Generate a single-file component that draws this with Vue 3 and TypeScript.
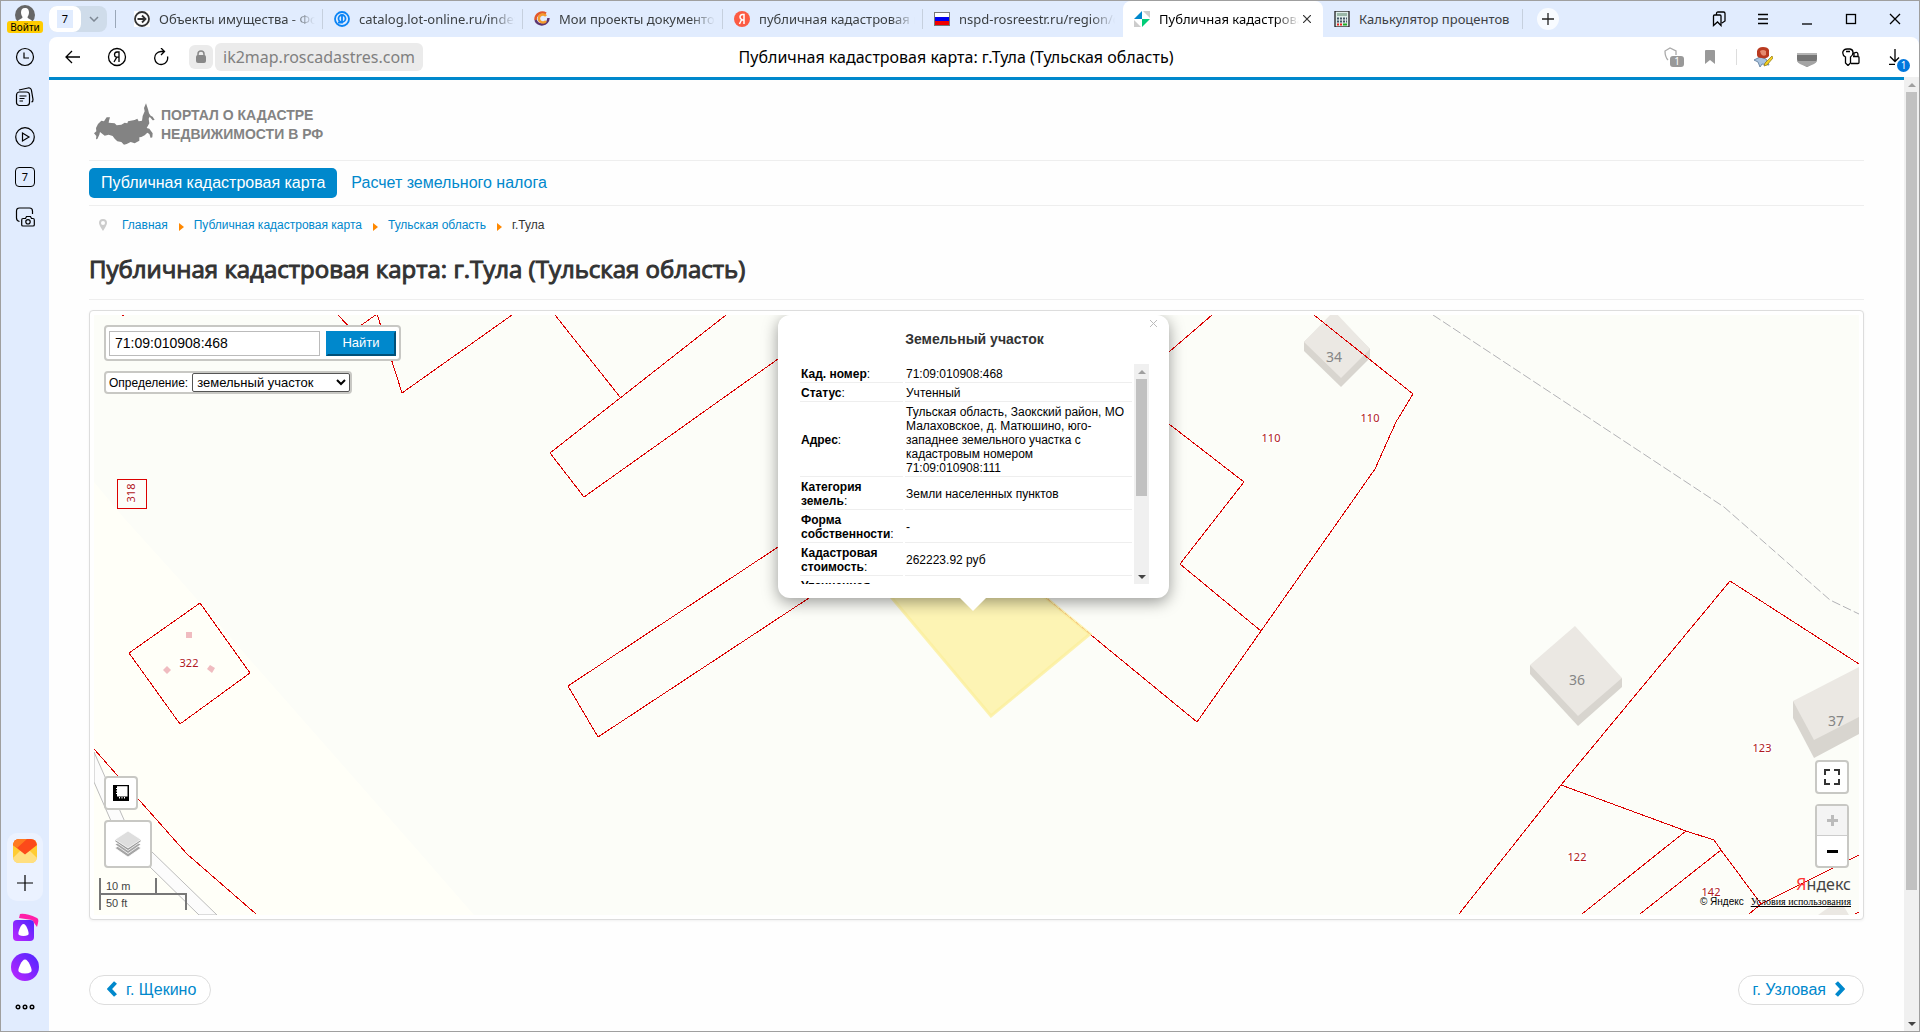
<script setup lang="ts">
import { ref } from 'vue'

interface Tab { title: string; icon: string; active?: boolean }
interface Fact { name: string; value: string }
interface Label { x: number; y: number; text: string }

const tabs: Tab[] = [
  { title: 'Объекты имущества - Фонд', icon: 'arrow' },
  { title: 'catalog.lot-online.ru/index.php', icon: 'lot' },
  { title: 'Мои проекты документов', icon: 'swirl' },
  { title: 'публичная кадастровая карта', icon: 'ya' },
  { title: 'nspd-rosreestr.ru/region/center', icon: 'flag' },
  { title: 'Публичная кадастровая карта', icon: 'cadastre', active: true },
  { title: 'Калькулятор процентов', icon: 'calc' },
]

const facts: Fact[] = [
  { name: 'Кад. номер', value: '71:09:010908:468' },
  { name: 'Статус', value: 'Учтенный' },
  { name: 'Адрес', value: 'Тульская область, Заокский район, МО Малаховское, д. Матюшино, юго-западнее земельного участка с кадастровым номером 71:09:010908:111' },
  { name: 'Категория земель', value: 'Земли населенных пунктов' },
  { name: 'Форма собственности', value: '-' },
  { name: 'Кадастровая стоимость', value: '262223.92 руб' },
  { name: 'Уточненная площадь', value: '' },
]

const parcelLabels: Label[] = [
  { x: 1271, y: 442, text: '110' },
  { x: 1370, y: 422, text: '110' },
  { x: 1762, y: 752, text: '123' },
  { x: 1577, y: 861, text: '122' },
  { x: 1711, y: 896, text: '142' },
  { x: 189, y: 667, text: '322' },
]
const houseLabels: Label[] = [
  { x: 1334, y: 362, text: '34' },
  { x: 1577, y: 685, text: '36' },
  { x: 1836, y: 726, text: '37' },
]

const query = ref('71:09:010908:468')
const kind = ref('parcel')
</script>

<template>
  <div class="frame">
    <aside class="rail">
      <button class="login" aria-label="Войти">
        <svg width="20" height="20" viewBox="0 0 20 20"><circle cx="10" cy="10" r="10" fill="#666" /><path d="M10 3c3 0 4 2 4 4.500c0 2-1 3.500-1.500 4.500c0 2 3.500 2 4.500 4a10 10 0 0 1-14 0c1-2 4.500-2 4.500-4C7 11 6 9.500 6 7.500C6 5 7 3 10 3z" fill="#fff" /></svg>
        <span>Войти</span>
      </button>
      <button class="rail-btn" aria-label="История"><svg width="20" height="20" viewBox="0 0 20 20"><circle cx="10" cy="10" r="8.500" /><path d="M9 5.500V11h5" /></svg></button>
      <button class="rail-btn" aria-label="Коллекции"><svg width="20" height="20" viewBox="0 0 20 20"><rect x="1.500" y="5" width="13" height="13.500" rx="3" /><path d="M4 3l9-2q3-.5 3.500 2.500l1.500 9q.2 2-1.500 2.500M4.500 9h7M4.500 11.500h5M4.500 14h3.500" /></svg></button>
      <button class="rail-btn" aria-label="Видео"><svg width="20" height="20" viewBox="0 0 20 20"><circle cx="10" cy="10" r="9.300" /><path d="M7.500 6v8l6.500-4z" /></svg></button>
      <button class="rail-btn seven">7</button>
      <button class="rail-btn" aria-label="Снимок"><svg width="20" height="20" viewBox="0 0 20 20"><path d="M4.500 14.500Q1.500 14 1.500 11V4q0-3 3-3h10q3 0 3 3v3" /><path d="M8 11.500h2.500l1-2h4l1 2H18q1.300 0 1.300 1.500v5q0 1-1.300 1H8q-1.300 0-1.300-1v-5q0-1.500 1.300-1.500z" /><circle cx="13" cy="14.800" r="2.200" /></svg></button>
      <div class="rail-group">
        <button class="plain" aria-label="Почта"><svg width="24" height="24" viewBox="0 0 24 24"><rect width="24" height="24" rx="6" fill="#ffcc33" /><path d="M0 19L8 11l4 4 4-4 8 8q-1 5-6 5H6q-5 0-6-5z" fill="#ffdf80" /><path d="M0 6Q1 0 6 0h12q5 0 6 6L12 15.500z" fill="#fc4a1a" /><path d="M0 6Q1 0 6 0h8L4 9z" fill="#ff7a1f" /></svg></button>
        <button class="plain" aria-label="Добавить"><svg width="16" height="16" viewBox="0 0 16 16" stroke="#000" stroke-width="1.200"><path d="M8 0v16M0 8h16" /></svg></button>
      </div>
      <div class="alice">
        <svg width="28" height="28" viewBox="0 0 28 28">
          <defs><linearGradient id="violet" x1="0" y1="1" x2="1" y2="0"><stop offset="0" stop-color="#c026ff" /><stop offset="1" stop-color="#4a26ff" /></linearGradient></defs>
          <path d="M8 5L9 1q6-1 17 4q2 1 1 5l-1 4-5-7z" fill="#ff1fa8" /><rect x="2" y="7" width="21" height="21" rx="4" fill="url(#violet)" /><path d="M12.500 11q2 0 4 5t.5 6q-2 1-4.500 1t-4.500-1q-1.500-1 .5-6t4-5z" fill="#fff" />
        </svg>
        <svg width="28" height="28" viewBox="0 0 28 28"><circle cx="14" cy="14" r="14" fill="url(#violet)" /><path d="M14 6.500q2.500 0 5 5.500t1 7q-2.500 1.500-6 1.500t-6-1.500q-1.500-1.500 1-7t5-5.500z" fill="#fff" /></svg>
        <svg width="20" height="8" viewBox="0 0 20 8" fill="none" stroke="#000" stroke-width="1.400"><circle cx="3" cy="4" r="1.800" /><circle cx="10" cy="4" r="1.800" /><circle cx="17" cy="4" r="1.800" /></svg>
      </div>
    </aside>

    <div class="window">
      <header class="strip">
        <div class="tab-count"><button class="count">7</button><button class="more" aria-label="Группы"><svg width="10" height="6" viewBox="0 0 10 6" fill="none" stroke="#7e8894" stroke-width="1.500"><path d="M1 1l4 4 4-4" /></svg></button></div>
        <nav class="tabs">
          <a v-for="t in tabs" :key="t.title" href="#" class="tab" :class="{ active: t.active }">
            <svg class="fav" width="16" height="16" viewBox="0 0 16 16">
              <g v-if="t.icon === 'arrow'" fill="none" stroke="#333" stroke-width="1.800"><rect width="16" height="16" fill="#fff" stroke="none" /><circle cx="8" cy="8" r="7" /><path d="M3.500 8h8M8 4.500L11.500 8 8 11.500" /></g>
              <g v-else-if="t.icon === 'lot'" fill="none" stroke="#0a84f5" stroke-width="1.800"><circle cx="8" cy="8" r="7" /><circle cx="8" cy="7.500" r="3.500" /><path d="M8 5v6.500H4" /></g>
              <g v-else-if="t.icon === 'swirl'" fill="none" stroke-width="2.500"><path d="M12 2.500A7 7 0 0 0 1.500 9" stroke="#e2582b" /><path d="M1.500 9a6.700 6.700 0 0 0 13-2" stroke="#5c3570" /><path d="M12 5a4 4 0 1 0 0 5" stroke="#f49b2c" /></g>
              <g v-else-if="t.icon === 'ya'"><circle cx="8" cy="8" r="8" fill="#fc5b43" /><path d="M10 13V3.500H8.500Q6 3.700 6 6q0 1.600 1.600 2.500L5.500 13M10 9H8" fill="none" stroke="#fff" stroke-width="1.500" /></g>
              <g v-else-if="t.icon === 'flag'"><rect y="1" width="16" height="14" fill="#777" /><rect x="1" y="2" width="14" height="4" fill="#fff" /><rect x="1" y="6" width="14" height="4" fill="#0000f0" /><rect x="1" y="10" width="14" height="4" fill="#f00000" /></g>
              <g v-else-if="t.icon === 'cadastre'"><path d="M8 0v8H0z" fill="#0088cc" /><path d="M9 0h7v7z" fill="#ccc" /><path d="M0 9v7h7z" fill="#ccc" /><path d="M8 8h8l-8 8z" fill="#00cc77" /></g>
              <g v-else><rect x="1" width="14" height="16" fill="#dfeeea" stroke="#222" stroke-width="1.300" /><rect x="3" y="2" width="10" height="3" fill="#9ab8a8" /><path d="M3 7.500h2m1 0h2m1 0h2m1 0h1M3 10.500h2m1 0h2m1 0h2m1 0h1" stroke="#456" stroke-width="2" /><path d="M3 13.500h2m1 0h2" stroke="#e22" stroke-width="2" /><path d="M9 13.500h4" stroke="#2a2" stroke-width="2" /></g>
            </svg>
            <span class="tab-title" :class="{ short: t.icon === 'calc' }">{{ t.title }}</span>
            <svg v-if="t.active" class="tab-x" width="8" height="8" viewBox="0 0 8 8" stroke="#333" stroke-width="1.200"><path d="M0 0l8 8M8 0L0 8" /></svg>
          </a>
        </nav>
        <button class="new-tab" aria-label="Новая вкладка"><svg width="12" height="12" viewBox="0 0 12 12" stroke="#222" stroke-width="1.300"><path d="M6 0v12M0 6h12" /></svg></button>
        <div class="win-btns">
          <button class="wbtn" aria-label="Закладки"><svg width="14" height="16" viewBox="0 0 14 16"><path d="M1.500 5q0-1 1-1h5.500q1 0 1 1v9.500L5.500 11l-4 3.500zM4.500 3.500V2.500q0-1.500 1.500-1.500h5.500q1.500 0 1.500 1.500V10l-3 2" /></svg></button>
          <button class="wbtn" aria-label="Меню"><svg width="12" height="12" viewBox="0 0 12 12"><path d="M1 1.500h10M1 6h10M1 10.500h10" /></svg></button>
          <button class="wbtn" aria-label="Свернуть"><svg width="12" height="12" viewBox="0 0 12 12"><path d="M1 11h10" /></svg></button>
          <button class="wbtn" aria-label="Развернуть"><svg width="12" height="12" viewBox="0 0 12 12"><rect x="1.500" y="1.500" width="9" height="9" /></svg></button>
          <button class="wbtn" aria-label="Закрыть"><svg width="12" height="12" viewBox="0 0 12 12"><path d="M1 1l10 10M11 1L1 11" /></svg></button>
        </div>
      </header>

      <div class="toolbar">
        <div class="tool-left">
          <button class="wbtn" aria-label="Назад"><svg width="16" height="14" viewBox="0 0 16 14"><path d="M7 1L1 7l6 6M1 7h14" /></svg></button>
          <button class="wbtn" aria-label="Яндекс"><svg width="20" height="20" viewBox="0 0 20 20"><circle cx="10" cy="10" r="8.500" /><path d="M12 15V5h-2Q7.500 5.200 7.500 7.700q0 2 2 2.500H12M9.800 10.200L7 15" /></svg></button>
          <button class="wbtn" aria-label="Обновить"><svg width="16" height="18" viewBox="0 0 16 18"><path d="M14.500 8.500a6.500 6.500 0 1 1-6.500-5h3M8 0l3.500 3.500L8 7" /></svg></button>
          <span class="lock"><svg width="10" height="14" viewBox="0 0 10 14"><rect y="5" width="10" height="8" rx="2" fill="#888" /><path d="M2 6V4a3 3 0 0 1 6 0v2" fill="none" stroke="#888" stroke-width="1.500" /></svg></span>
          <span class="url">ik2map.roscadastres.com</span>
        </div>
        <div class="page-title">Публичная кадастровая карта: г.Тула (Тульская область)</div>
        <div class="tool-right">
          <button class="wbtn narrow" aria-label="Защита"><svg width="20" height="20" viewBox="0 0 20 20"><path d="M4 13Q1 10 1 4l5-3 6 3v4" fill="none" stroke="#aaa" /><rect x="6" y="9" width="14" height="11" rx="3" fill="#999" /><text x="13" y="18" font-size="10" text-anchor="middle" fill="#fff">1</text></svg></button>
          <button class="wbtn solid" aria-label="В закладки"><svg width="10" height="14" viewBox="0 0 10 14"><path d="M0 1q0-1 1-1h8q1 0 1 1v13L5 10l-5 4z" fill="#999" /></svg></button>
          <span class="tool-sep"></span>
          <button class="wbtn solid" aria-label="Аукционы"><svg width="20" height="20" viewBox="0 0 20 20"><path d="M1 13l6-3 6 2 3 6-7-1-2 3-2-5z" fill="#a9c3df" stroke="#6f8ba8" stroke-width="1" /><path d="M4 4q1-4 6-4t6 3v6q-2 3-7 2-5 0-5-3z" fill="#b93a20" /><path d="M7 4q3-2 6 0v4q-3 2-5-1z" fill="#e58b70" /><path d="M11 19l1-3 7-7 1 2-6 7z" fill="#f5d020" stroke="#8a7210" stroke-width=".7" /></svg></button>
          <button class="wbtn solid" aria-label="Расширение"><svg width="20" height="20" viewBox="0 0 20 20"><path d="M0 6h20v3H0z" fill="#b4b4b4" /><path d="M0 8h20v4q0 3-3 4l-7 4-7-4q-3-1-3-4z" fill="#757575" /><path d="M0 14h20q-1 2-3 3l-7 3-7-3q-2-1-3-3z" fill="#a4a4a4" /></svg></button>
          <button class="wbtn" aria-label="Пароли"><svg width="18" height="18" viewBox="0 0 18 18"><path d="M3.500 9Q0 7 1 3.500Q2 1 5 1h3q3 .5 3 3.500T8.500 9v6L6 17.500 3.500 15zM4 3.500h4M9 15.500h7q1 0 1-1V9.500q0-1-1-1h-5M12 8V5q4-2 4 2v1.500" /></svg></button>
          <button class="wbtn download" aria-label="Загрузки"><svg width="12" height="16" viewBox="0 0 12 16"><path d="M6 0v12M1 7.500L6 12.500l4-4M0 15.500h6" /></svg><b>1</b></button>
        </div>
      </div>

      <div class="viewport">
        <main class="page">
          <a class="logo" href="#">
            <svg width="62" height="42" viewBox="282 309 186 126"><path d="M438 310L444 328 447 340 452 347 458 350 464 360 458 361 449 350 446 356 448 370 440 384 448 386 458 400 457 412 452 414 448 402 442 398 434 406 424 411 418 412 418 422 404 430 392 426 380 432 372 434 364 426 352 424 344 416 338 408 326 404 314 407 300 396 298 404 292 417 288 418 289 408 282 400 289 394 288 384 294 372 304 362 312 364 320 352 330 352 327 362 326 368 344 370 350 376 364 374 374 368 382 370 384 364 404 360 412 356 416 364 426 362 428 348 434 334 432 324Z" fill="#838383" /></svg>
            <span>ПОРТАЛ О КАДАСТРЕ<br>НЕДВИЖИМОСТИ В РФ</span>
          </a>
          <nav class="menu">
            <a href="#" class="current">Публичная кадастровая карта</a>
            <a href="#">Расчет земельного налога</a>
          </nav>
          <nav class="crumbs">
            <svg width="8" height="12" viewBox="0 0 8 12"><path d="M4 0a4 4 0 0 1 4 4q0 2-4 8Q0 6 0 4a4 4 0 0 1 4-4zM4 2a2 2 0 1 0 0 4a2 2 0 0 0 0-4z" fill="#ccc" fill-rule="evenodd" /></svg>
            <a href="#">Главная</a><i></i><a href="#">Публичная кадастровая карта</a><i></i><a href="#">Тульская область</a><i></i><span>г.Тула</span>
          </nav>
          <h1>Публичная кадастровая карта: г.Тула (Тульская область)</h1>

          <section class="map-box">
            <div class="map">
              <svg class="plan" viewBox="94 315 1765 600" preserveAspectRatio="xMinYMin slice">
                <rect x="94" y="315" width="1765" height="600" fill="#fcfdf8" />
                <path d="M94 482L124 518 180 580 420 853 474 915H94Z" fill="#fffff8" />
                <path d="M94 752L125 822 151 851 217 915H199L149 866 111 821 94 782Z" fill="#fcfcfc" stroke="#bcbcbc" />
                <g fill="#ebe8e3">
                  <path d="M1304 342L1334 313 1370 349V358L1341 387 1304 351Z" fill="#d8d5cf" />
                  <path d="M1304 342L1334 311 1370 349 1341 378Z" />
                  <path d="M1530 665V674L1578 726 1622 687V678Z" fill="#d8d5cf" />
                  <path d="M1530 665L1575 626 1622 678 1578 716Z" />
                  <path d="M1793 701V718L1814 758 1859 734V717Z" fill="#d8d5cf" />
                  <path d="M1793 701L1859 667V717L1814 740Z" />
                  <path d="M1818 915L1832 905H1843L1849 915Z" />
                </g>
                <path d="M1433 315L1724 507 1830 600 1859 614" fill="none" stroke="#b2b2b6" stroke-dasharray="9 3" />
                <g class="parcels">
                  <path d="M338 315L353 331 377 314 402 393 512 315M122 316l4-2M555 315L620 397M726 315L550 453 584 497 778 359M778 547L568 686 598 737 809 598" />
                  <path d="M1046 598L1197 722 1261 631 1180 564 1244 482 1169 424M1261 631L1375 469 1396 422 1413 394 1314 315M1169 352L1212 315" />
                  <path d="M1859 664L1730 581 1561 785 1459 914M1561 785L1686 831 1714 840 1721 850 1761 904 1859 855M1761 904L1749 914M1686 831L1582 914M1721 850L1640 914M1855 914l4-2" />
                  <path d="M117 479H146V508H117ZM200 603L129 653 180 724 250 673ZM94 749L187 854 256 914" />
                </g>
                <path d="M892 598L991 716 1090 634 1046 598 973 540Z" fill="#fdf09a" fill-opacity=".72" stroke="#fbef9c" stroke-width="3" stroke-opacity=".8" />
                <g fill="#f0bcc0"><rect x="186" y="632" width="6" height="6" /><path d="M163 670l4-4 4 4-4 4zM207 669l3-4 5 3-3 5z" /></g>
                <text v-for="l in parcelLabels" :key="l.text + l.x" class="num" :x="l.x" :y="l.y">{{ l.text }}</text>
                <text class="num" x="131" y="493" dy="4" transform="rotate(-90 131 493)">318</text>
                <text v-for="l in houseLabels" :key="l.text" class="house" :x="l.x" :y="l.y">{{ l.text }}</text>
              </svg>

              <div class="top-tools">
                <form class="search" @submit.prevent>
                  <input v-model="query" type="text" aria-label="Кадастровый номер">
                  <button type="submit">Найти</button>
                </form>
                <div class="kind">
                  <label for="kind">Определение:</label>
                  <select id="kind" v-model="kind"><option value="parcel">земельный участок</option><option value="building">объект капстроительства</option></select>
                </div>
              </div>

              <div class="left-tools">
                <button class="ctl" aria-label="Линейка"><svg width="16" height="16" viewBox="0 0 16 16"><path d="M0 0h16v16H0z" /><path d="M4 1.200h10.500v10.300H4z" fill="#fff" /><path d="M3 3.500h2M3 6h2M3 8.500h2M6.500 12v1.500M9 12v1.500M11.500 12v1.500" stroke="#fff" /></svg></button>
                <button class="ctl layers" aria-label="Слои"><svg width="26" height="26" viewBox="0 0 26 26" stroke="#fff" stroke-width=".8"><path d="M0 17l13-8 13 8-13 9z" fill="#a5a5a5" /><path d="M0 13.500l13-8 13 8-13 9z" fill="#a5a5a5" /><path d="M0 8.500L13 1l13 7.500v2L13 19.500 0 10.500z" fill="#999" /><path d="M0 8.500L13 0l13 8.500-13 8.500z" fill="#dedede" /></svg></button>
                <div class="scale"><span class="metres">10 m</span><span class="feet">50 ft</span></div>
              </div>

              <div class="right-tools">
                <button class="ctl" aria-label="На весь экран"><svg width="16" height="16" viewBox="0 0 16 16" fill="none" stroke="#333" stroke-width="2"><path d="M1 6V1h5M10 1h5v5M15 10v5h-5M6 15H1v-5" /></svg></button>
                <div class="zoom">
                  <button class="off" aria-label="Приблизить"><svg width="11" height="11" viewBox="0 0 11 11"><path d="M4 0h3v4h4v3H7v4H4V7H0V4h4z" fill="#bbb" /></svg></button>
                  <button aria-label="Отдалить"><svg width="11" height="3" viewBox="0 0 11 3"><path d="M0 0h11v3H0z" /></svg></button>
                </div>
              </div>
              <div class="credits">
                <div class="brand"><span>Я</span>ндекс</div>
                <div class="terms"><span>© Яндекс</span><a href="#">Условия использования</a></div>
              </div>

              <article class="balloon">
                <button class="balloon-x" aria-label="Закрыть"><svg width="7" height="7" viewBox="0 0 7 7" stroke="#bbb"><path d="M0 0l7 7M7 0L0 7" /></svg></button>
                <h2>Земельный участок</h2>
                <div class="scroller">
                  <div class="facts">
                    <table>
                      <tbody>
                        <tr v-for="f in facts" :key="f.name"><td class="name"><b>{{ f.name }}</b>:</td><td>{{ f.value }}</td></tr>
                      </tbody>
                    </table>
                  </div>
                  <div class="bar small"><span class="up"></span><span class="thumb"></span><span class="down"></span></div>
                </div>
              </article>
            </div>
          </section>

          <nav class="pager">
            <a href="#"><svg width="10" height="16" viewBox="0 0 10 16"><path d="M8.500 1.500L2.500 8l6 6.500" /></svg>г. Щекино</a>
            <a href="#">г. Узловая<svg width="10" height="16" viewBox="0 0 10 16"><path d="M1.500 1.500l6 6.500-6 6.500" /></svg></a>
          </nav>
        </main>
        <div class="bar"><span class="up"></span><span class="thumb"></span><span class="down"></span></div>
      </div>
    </div>
  </div>
</template>

<style>
body { margin: 0; }
</style>

<style scoped>
* { box-sizing: border-box; }
.frame { display: flex; min-height: 100vh; border: 1px solid #9f9f9f; background: #e1ecfe; font-family: "Noto Sans", sans-serif; color: #000; }
button { margin: 0; padding: 0; border: 0; background: none; font: inherit; color: inherit; }
a { text-decoration: none; color: #08c; }
svg { display: block; flex: none; }

/* left rail */
.rail { flex: none; width: 48px; display: flex; flex-direction: column; align-items: center; padding-top: 4px; }
.login { display: flex; flex-direction: column; align-items: center; height: 32px; }
.login span { width: 36px; height: 12px; margin-top: -4px; border-radius: 3px; background: #fc0; font-size: 10px; line-height: 12px; text-align: center; z-index: 1; }
.rail-btn { display: flex; align-items: center; justify-content: center; width: 40px; height: 40px; }
.rail-btn svg { fill: none; stroke: #000; stroke-width: 1.2; }
.seven { width: 20px; height: 20px; margin: 10px 0; border: 1px solid #000; border-radius: 4px; font-size: 11px; line-height: 18px; }
.rail-group { display: flex; flex-direction: column; align-items: center; gap: 12px; width: 36px; height: 68px; margin-top: auto; padding-top: 6px; border-radius: 10px; background: #ebf2ff; }
.alice { display: flex; flex-direction: column; align-items: center; gap: 12px; padding: 12px 0 20px; }
.alice svg:last-child { margin-top: 10px; }

/* tab strip */
.window { flex: 1; min-width: 0; display: flex; flex-direction: column; }
.strip { display: flex; align-items: center; height: 36px; }
.tab-count { flex: none; display: flex; width: 58px; height: 26px; border-radius: 8px; background: #cfdcea; }
.count { width: 32px; border-radius: 8px; background: #e1ecfe; border: 4px solid #fff; border-width: 4px 8px; font-size: 11px; line-height: 16px; }
.more { display: flex; align-items: center; justify-content: center; width: 26px; }
.tabs { display: flex; align-self: stretch; flex: 0 1 1408px; min-width: 0; margin-left: 8px; padding-left: 8px; background: linear-gradient(#9aa7b8, #9aa7b8) 0 9px / 1px 18px no-repeat; }
.tab { flex: 1 1 200px; min-width: 0; display: flex; align-items: center; padding: 0 8px 0 11px; font-size: 13px; line-height: 20px; color: #3c4043; background: linear-gradient(#c6d0de, #c6d0de) 100% 8px / 1px 20px no-repeat; }
.tab:nth-child(5) { background: none; }
.tab.active { background: #fff; border-radius: 8px 8px 0 0; color: #000; }
.tab-title { flex: 1; min-width: 0; margin-left: 9px; white-space: nowrap; overflow: hidden; mask-image: linear-gradient(to right, #000 calc(100% - 24px), transparent); }
.tab-title.short { mask-image: none; }
.tab-x { margin: 0 4px; }
.new-tab { flex: none; display: flex; align-items: center; justify-content: center; width: 22px; height: 22px; margin-left: 14px; border-radius: 50%; background: #f8fbff; }
.win-btns, .tool-left, .tool-right { display: flex; align-items: center; flex: none; }
.win-btns { margin-left: auto; padding-right: 2px; }
.wbtn { display: flex; align-items: center; justify-content: center; width: 44px; height: 36px; }
.wbtn svg { fill: none; stroke: #000; stroke-width: 1.3; }
.wbtn.solid svg { stroke: none; }
.wbtn text, .wbtn rect[rx] { stroke: none; }

/* address bar */
.toolbar { display: grid; grid-template-columns: 1fr auto 1fr; align-items: center; height: 40px; background: #fff; border-radius: 8px 8px 0 0; }
.tool-left { padding-left: 2px; }
.lock { display: flex; align-items: center; justify-content: center; width: 24px; height: 24px; margin-left: 6px; border-radius: 6px; background: #ebebeb; }
.url { height: 28px; margin-left: 2px; padding: 0 8px; border-radius: 6px; background: #ebebeb; color: #808080; font-size: 16px; line-height: 28px; }
.page-title { margin-right: 56px; font-size: 16px; line-height: 24px; white-space: nowrap; }
.tool-right { justify-content: flex-end; padding-right: 2px; }
.narrow { width: 28px; }
.tool-sep { width: 1px; height: 16px; margin: 0 4px; background: #ddd; }
.download { position: relative; }
.download b { position: absolute; left: 24px; top: 20px; width: 13px; height: 13px; border-radius: 50%; background: #0077dd; color: #fff; font-size: 10px; line-height: 13px; font-weight: 400; text-align: center; }

/* site */
.viewport { flex: 1; display: flex; }
.page { flex: 1; min-width: 0; padding: 23px 40px 25px; border-top: 3px solid #08c; background: #fefefe; font-family: "Liberation Sans", sans-serif; color: #333; }
.logo { display: flex; height: 57px; color: #838383; font-size: 14px; line-height: 19px; font-weight: 700; padding-left: 5px; }
.logo span { margin: 3px 0 0 5px; }
.menu { display: flex; align-items: center; gap: 2px; height: 46px; border: solid #eee; border-width: 1px 0; }
.menu a { padding: 0 12px; border-radius: 5px; font-size: 16px; line-height: 30px; }
.menu .current { background: #08c; color: #fff; }
.crumbs { display: flex; align-items: center; height: 38px; padding-left: 10px; font-size: 12px; line-height: 18px; }
.crumbs svg { margin-right: 15px; }
.crumbs i { margin: 3px 10px 0 11px; border: solid transparent; border-width: 4px 0 4px 5px; border-left-color: #f80; }
h1 { margin: 0; height: 56px; padding-top: 7px; border-bottom: 1px solid #eee; color: #333; font-family: "Open Sans", sans-serif; font-size: 24px; line-height: 36px; font-weight: 400; -webkit-text-stroke: 1px #333; }
.map-box { margin-top: 10px; padding: 4px; border: 1px solid #ddd; border-radius: 4px; background: #fff; box-shadow: 0 1px 3px rgba(0, 0, 0, .055); }
.map { position: relative; height: 600px; overflow: hidden; background: #fcfdf8; }
.plan { width: 100%; height: 100%; }
.parcels { fill: none; stroke: #dc0000; stroke-width: 1; shape-rendering: crispEdges; }
.num { font: 11px "Noto Sans", sans-serif; fill: #b01820; text-anchor: middle; paint-order: stroke; stroke: #fff; stroke-width: 3px; }
.house { font: 14px "Noto Sans", sans-serif; fill: #858585; text-anchor: middle; }

.top-tools { position: absolute; left: 10px; top: 10px; display: flex; flex-direction: column; align-items: flex-start; gap: 10px; }
.search { display: flex; align-items: center; gap: 6px; height: 36px; padding: 0 3px; border: 2px solid #c8c8c4; border-radius: 4px; background: #fff; }
.search input { width: 211px; height: 25px; padding: 0 5px; border: 1px solid #bbb; font: 14px "Liberation Sans", sans-serif; color: #000; }
.search button { width: 70px; height: 25px; border: 2px outset #08c; background: #08c; color: #fff; font-size: 13px; line-height: 20px; }
.kind { display: flex; align-items: center; height: 23px; padding-left: 3px; border: 2px solid #c8c8c4; border-radius: 4px; background: #fff; color: #000; font-size: 12px; }
.kind select { width: 158px; height: 19px; margin-left: 4px; padding: 0; border: 1px solid #555; border-radius: 2px; background: #fff; font: 13px "Liberation Sans", sans-serif; }
.left-tools { position: absolute; left: 10px; bottom: 5px; display: flex; flex-direction: column; align-items: flex-start; gap: 10px; }
.ctl { display: flex; align-items: center; justify-content: center; width: 34px; height: 34px; border: 2px solid #c8c8c4; border-radius: 4px; background: #fff; }
.layers { width: 48px; height: 48px; }
.scale { margin-left: -5px; font-size: 11px; line-height: 16px; color: #444; }
.scale span { display: block; height: 17px; padding-left: 5px; border: solid #777; border-width: 0 2px 2px; }
.scale .metres { width: 58px; }
.scale .feet { width: 88px; border-width: 2px 2px 0; margin-top: -2px; }
.right-tools { position: absolute; right: 10px; bottom: 47px; display: flex; flex-direction: column; gap: 10px; }
.zoom { height: 64px; border: 2px solid #c8c8c4; border-radius: 4px; background: #fff; }
.zoom button { display: flex; align-items: center; justify-content: center; width: 30px; height: 30px; }
.zoom .off { background: #f4f4f4; border-bottom: 1px solid #ccc; }
.credits { position: absolute; right: 8px; bottom: 6px; text-align: right; color: #000; }
.brand { font: 16px/22px "Noto Sans", sans-serif; color: #444; }
.brand span { color: #f33; }
.terms { display: flex; gap: 7px; font-size: 10px; line-height: 14px; }
.terms a { color: #000; text-decoration: underline; font-family: "Liberation Serif", serif; }

.balloon { position: absolute; left: 684px; top: 0; width: 391px; height: 283px; padding: 12px 20px 0 22px; border-radius: 12px; background: #fff; box-shadow: 0 4px 16px rgba(0, 0, 0, .4); }
.balloon::after { content: ""; position: absolute; left: 182px; top: 283px; border: 13px solid transparent; border-top-color: #fff; border-bottom: 0; }
.balloon-x { position: absolute; right: 12px; top: 5px; }
h2 { margin: 0 0 13px; color: #333; font-size: 14px; line-height: 24px; text-align: center; }
.scroller { display: flex; height: 220px; overflow: hidden; }
.facts { flex: 1; overflow: hidden; margin-left: -2px; }
table { width: 100%; border-spacing: 2px; color: #000; font-size: 12px; line-height: 14px; }
td { padding: 1px; border-bottom: 1px solid #eee; }
.name { width: 103px; }

.bar { flex: none; width: 15px; display: flex; flex-direction: column; align-items: center; background: #f0f0f0; padding: 6px 0 5px; }
.bar span { flex: none; }
.bar .up { border: 4px solid transparent; border-top: 0; border-bottom-color: #a0a0a0; }
.bar .down { margin-top: auto; border: 4px solid transparent; border-bottom: 0; border-top-color: #444; }
.bar .thumb { width: 11px; height: 798px; margin-top: 5px; background: #c1c1c1; }
.bar.small .thumb { height: 117px; }

.pager { display: flex; justify-content: space-between; margin-top: 55px; }
.pager a { display: flex; align-items: center; gap: 9px; height: 30px; padding: 0 14px 0 17px; border: 1px solid #ddd; border-radius: 15px; background: #fff; font-size: 16px; line-height: 28px; }
.pager a:last-child { padding: 0 18px 0 14px; }
.pager svg { fill: none; stroke: #08c; stroke-width: 4; margin-bottom: 3px; }
</style>
